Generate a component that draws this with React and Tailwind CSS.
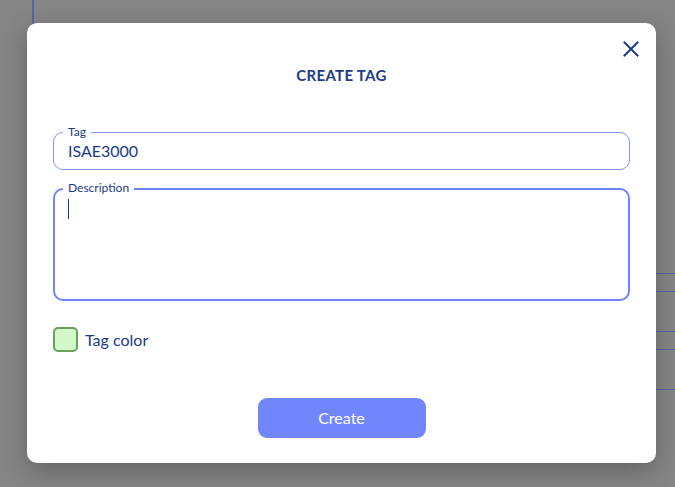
import React from "react";

export default function App() {
  const font = { fontFamily: 'Lato, "Open Sans", sans-serif' };
  return (
    <div className="relative w-[675px] h-[487px] overflow-hidden bg-[#858585] pl-[27px] pt-[23px]" style={font}>
      {/* underlying page hints behind the overlay */}
      <div className="absolute left-[32px] top-0 w-[2px] h-[30px] bg-[#5b62a3]" />
      <div className="absolute right-0 top-[273px] w-[30px] flex flex-col">
        <div className="h-px bg-[#5b62a3]" />
        <div className="h-px mt-[17px] bg-[#5b62a3]" />
        <div className="h-px mt-[39px] bg-[#5b62a3]" />
        <div className="h-px mt-[17px] bg-[#5b62a3]" />
        <div className="h-px mt-[39px] bg-[#5b62a3]" />
      </div>

      {/* modal */}
      <div className="relative w-[629px] h-[440px] bg-white rounded-[10px] shadow-[0_8px_24px_rgba(0,0,0,0.25)] flex flex-col px-[26px]">
        <button className="absolute right-[13px] top-[14px] w-[24px] h-[24px] flex items-center justify-center text-[#1a3b87]">
          <svg width="16" height="16" viewBox="0 0 16 16" fill="none" stroke="currentColor" strokeWidth="2" strokeLinecap="square">
            <path d="M1.5 1.5 L14.5 14.5 M14.5 1.5 L1.5 14.5" />
          </svg>
        </button>

        <h2 className="mt-[42px] text-center text-[15px] leading-[20px] font-bold text-[#1a3b87] tracking-[0.3px]">
          CREATE TAG
        </h2>

        {/* Tag field */}
        <div className="relative mt-[47px] h-[38px] rounded-[10px] border border-[#8596ff] flex items-center px-[14px]">
          <span className="absolute left-[9px] top-[-9px] px-[5px] bg-white text-[12px] leading-[16px] text-[#1a3b87]">Tag</span>
          <span className="text-[16px] text-[#1a3b87] leading-[22px]">ISAE3000</span>
        </div>

        {/* Description field */}
        <div className="relative mt-[18px] h-[113px] rounded-[10px] border-2 border-[#6f82ff] px-[13px] pt-[9px]">
          <span className="absolute left-[8px] top-[-10px] px-[5px] bg-white text-[12px] leading-[16px] text-[#1a3b87]">Description</span>
          <div className="w-px h-[20px] bg-[#1a3b87]" />
        </div>

        {/* Tag color */}
        <div className="mt-[26px] flex items-center gap-[7px]">
          <div className="w-[25px] h-[25px] rounded-[5px] border-2 border-[#6b9f5c] bg-[#d4f8c9]" />
          <span className="text-[16px] leading-[22px] text-[#1a3b87]">Tag color</span>
        </div>

        <div className="mt-[46px] flex justify-center">
          <button className="w-[168px] h-[40px] rounded-[9px] bg-[#7286fc] text-white text-[16px] leading-[22px]">
            Create
          </button>
        </div>
      </div>
    </div>
  );
}
